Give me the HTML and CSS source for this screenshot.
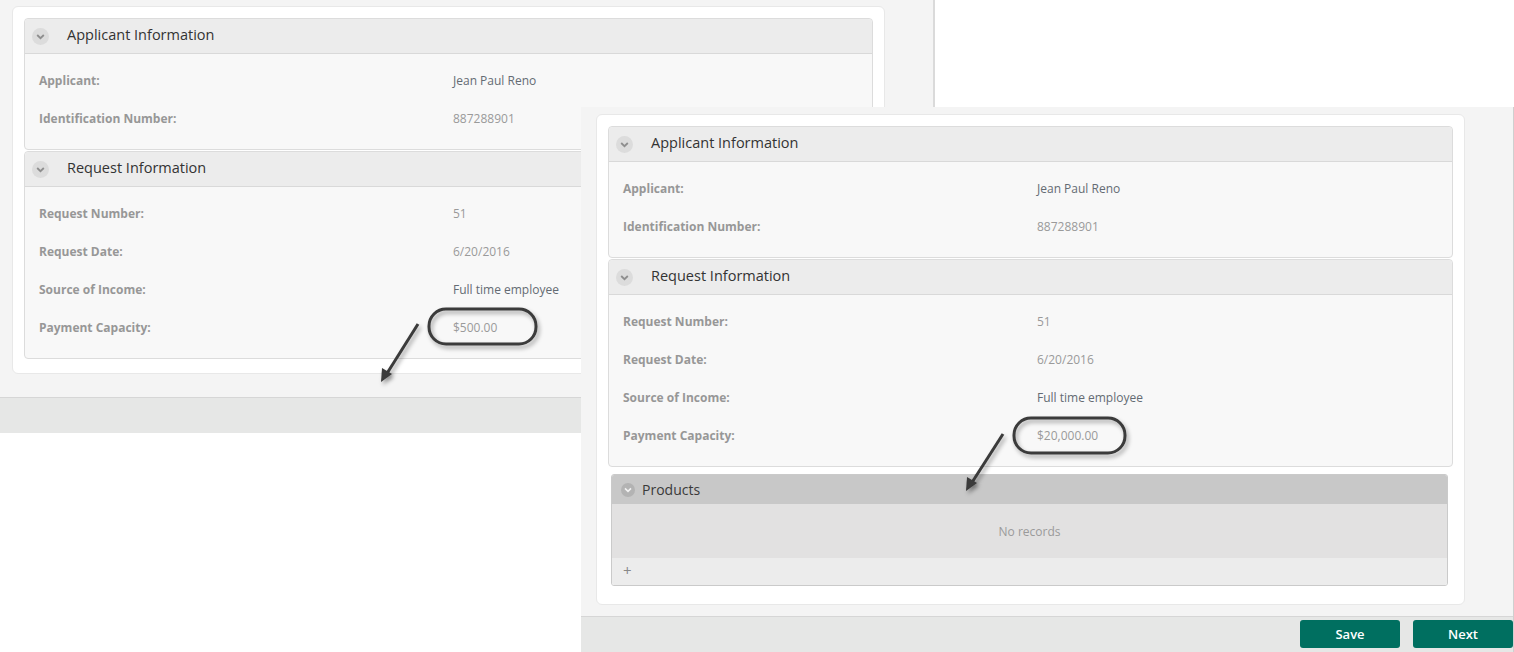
FILE: index.html
```html
<!DOCTYPE html>
<html lang="en">
<head>
    <meta charset="UTF-8">
    <meta name="viewport" content="width=device-width, initial-scale=1.0">
    <title>Payment Capacity - before / after</title>
    <link rel="stylesheet" href="styles.css">
</head>
<body>
    <!-- older screen, sits behind -->
    <div class="shot shot-back">
        <div class="card card-back">
            <section class="panel">
                <header class="panel-head">
                    <span class="toggle"><svg width="17" height="17" viewBox="0 0 17 17"><circle cx="8.5" cy="8.5" r="8.5" fill="#dcdcdc"/><path d="M5.2 7 L8.5 10.2 L11.8 7" fill="none" stroke="#8e8e8e" stroke-width="1.8"/></svg></span>
                    <h2>Applicant Information</h2>
                </header>
                <div class="panel-body">
                    <div class="row"><span class="label">Applicant:</span><span class="value dark">Jean Paul Reno</span></div>
                    <div class="row"><span class="label">Identification Number:</span><span class="value">887288901</span></div>
                </div>
            </section>
            <section class="panel">
                <header class="panel-head">
                    <span class="toggle"><svg width="17" height="17" viewBox="0 0 17 17"><circle cx="8.5" cy="8.5" r="8.5" fill="#dcdcdc"/><path d="M5.2 7 L8.5 10.2 L11.8 7" fill="none" stroke="#8e8e8e" stroke-width="1.8"/></svg></span>
                    <h2>Request Information</h2>
                </header>
                <div class="panel-body">
                    <div class="row"><span class="label">Request Number:</span><span class="value">51</span></div>
                    <div class="row"><span class="label">Request Date:</span><span class="value">6/20/2016</span></div>
                    <div class="row"><span class="label">Source of Income:</span><span class="value dark">Full time employee</span></div>
                    <div class="row"><span class="label">Payment Capacity:</span><span class="value">$500.00</span></div>
                </div>
            </section>
        </div>
        <div class="footer footer-back"></div>
    </div>

    <!-- newer screen, on top -->
    <div class="shot shot-front">
        <div class="card card-front">
            <section class="panel">
                <header class="panel-head">
                    <span class="toggle"><svg width="17" height="17" viewBox="0 0 17 17"><circle cx="8.5" cy="8.5" r="8.5" fill="#dcdcdc"/><path d="M5.2 7 L8.5 10.2 L11.8 7" fill="none" stroke="#8e8e8e" stroke-width="1.8"/></svg></span>
                    <h2>Applicant Information</h2>
                </header>
                <div class="panel-body">
                    <div class="row"><span class="label">Applicant:</span><span class="value dark">Jean Paul Reno</span></div>
                    <div class="row"><span class="label">Identification Number:</span><span class="value">887288901</span></div>
                </div>
            </section>
            <section class="panel">
                <header class="panel-head">
                    <span class="toggle"><svg width="17" height="17" viewBox="0 0 17 17"><circle cx="8.5" cy="8.5" r="8.5" fill="#dcdcdc"/><path d="M5.2 7 L8.5 10.2 L11.8 7" fill="none" stroke="#8e8e8e" stroke-width="1.8"/></svg></span>
                    <h2>Request Information</h2>
                </header>
                <div class="panel-body">
                    <div class="row"><span class="label">Request Number:</span><span class="value">51</span></div>
                    <div class="row"><span class="label">Request Date:</span><span class="value">6/20/2016</span></div>
                    <div class="row"><span class="label">Source of Income:</span><span class="value dark">Full time employee</span></div>
                    <div class="row"><span class="label">Payment Capacity:</span><span class="value">$20,000.00</span></div>
                </div>
            </section>

            <div class="grid">
                <div class="grid-head">
                    <span class="toggle-sm"><svg width="14" height="14" viewBox="0 0 14 14"><circle cx="7" cy="7" r="7" fill="#b3b3b3"/><path d="M4 5.4 L7 8.4 L10 5.4" fill="none" stroke="#f2f2f2" stroke-width="1.6"/></svg></span>
                    <span class="grid-title">Products</span>
                </div>
                <div class="grid-empty">No records</div>
                <div class="grid-foot">+</div>
            </div>
        </div>
        <div class="footer footer-front">
            <button class="btn">Save</button>
            <button class="btn">Next</button>
        </div>
    </div>

    <!-- hand drawn marks -->
    <svg class="marks" width="1514" height="652" viewBox="0 0 1514 652">
        <defs>
            <filter id="shade" x="-20%" y="-20%" width="140%" height="160%">
                <feDropShadow dx="2" dy="3" stdDeviation="2" flood-color="#000" flood-opacity="0.35"/>
            </filter>
        </defs>
        <g filter="url(#shade)" stroke="#3a3a3a" stroke-width="3" fill="none">
            <rect x="429" y="309" width="107" height="35" rx="17" ry="17"/>
            <line x1="418" y1="324" x2="386" y2="375"/>
            <rect x="1014" y="418" width="111" height="35" rx="17" ry="17"/>
            <line x1="1003" y1="434" x2="971" y2="484"/>
        </g>
        <g filter="url(#shade)" fill="#3a3a3a">
            <polygon points="381,382 382,368 392,374"/>
            <polygon points="966,491 967,477 977,483"/>
        </g>
    </svg>
</body>
</html>
```

FILE: styles.css
```css
body{
    margin: 0;
    background-color: #fff;
    font-family: "Open Sans", "Liberation Sans", Arial, sans-serif;
    color: #333;
}

.shot{
    position: absolute;
    box-sizing: border-box;
    display: flex;
    flex-direction: column;
    align-items: flex-start;
    background-color: #f4f4f4;
}
.shot-back{
    left: 0;
    top: 0;
    width: 935px;
    height: 433px;
    border-right: 2px solid #dadada;
}
.shot-front{
    left: 581px;
    top: 107px;
    width: 933px;
    height: 545px;
    border-right: 1px solid #cfcfcf;
}

.card{
    box-sizing: border-box;
    background-color: #fff;
    border: 1px solid #e8e8e8;
    border-radius: 6px;
    padding: 11px 11px 13px;
}
.card-back{
    margin: 6px 0 0 12px;
    width: 873px;
}
.card-front{
    margin: 7px 0 0 15px;
    width: 869px;
    padding-bottom: 18px;
}

.panel{
    border: 1px solid #dcdcdc;
    border-radius: 4px;
    background-color: #f8f8f8;
    margin-bottom: 1px;
}
.panel-head{
    display: flex;
    align-items: center;
    box-sizing: border-box;
    height: 35px;
    padding-bottom: 3px;
    background-color: #ececec;
    border-bottom: 1px solid #d9d9d9;
    border-radius: 4px 4px 0 0;
}
.toggle{
    display: flex;
    margin: 3px 0 0 7px;
    width: 17px;
    height: 17px;
}
.panel-head h2{
    margin: 0 0 0 18px;
    font-size: 14.5px;
    font-weight: normal;
    color: #333;
}
.panel-body{
    padding: 7px 14px 12px;
}
.row{
    display: grid;
    grid-template-columns: 414px 1fr;
    align-items: center;
    height: 38px;
    font-size: 12px;
}
.label{
    font-weight: bold;
    color: #979797;
}
.value{
    color: #9a9a9a;
}
.value.dark{
    color: #646b73;
}

.grid{
    margin: 7px 5px 0 3px;
    border: 1px solid #cacaca;
    border-radius: 3px;
    overflow: hidden;
}
.grid-head{
    display: flex;
    align-items: center;
    height: 29px;
    background-color: #c8c8c8;
}
.toggle-sm{
    display: flex;
    margin-left: 9px;
}
.grid-title{
    margin-left: 7px;
    font-size: 14px;
    color: #3a3a3a;
}
.grid-empty{
    height: 54px;
    line-height: 56px;
    text-align: center;
    background-color: #e2e1e1;
    font-size: 12px;
    color: #9a9a9a;
}
.grid-foot{
    height: 27px;
    line-height: 24px;
    padding-left: 11px;
    background-color: #ececec;
    font-size: 15px;
    color: #888;
}

.footer{
    box-sizing: border-box;
    align-self: stretch;
    margin-top: auto;
    background-color: #e6e7e6;
    border-top: 1px solid #d6d6d6;
}
.footer-back{
    height: 36px;
}
.footer-front{
    height: 36px;
    display: flex;
    justify-content: flex-end;
    gap: 13px;
    padding-top: 3px;
}
.btn{
    width: 100px;
    height: 28px;
    border: none;
    border-radius: 3px;
    background-color: #006f60;
    color: #fff;
    font-family: "Open Sans", "Liberation Sans", Arial, sans-serif;
    font-size: 13px;
    font-weight: 600;
}

.marks{
    position: absolute;
    left: 0;
    top: 0;
    pointer-events: none;
}
```
